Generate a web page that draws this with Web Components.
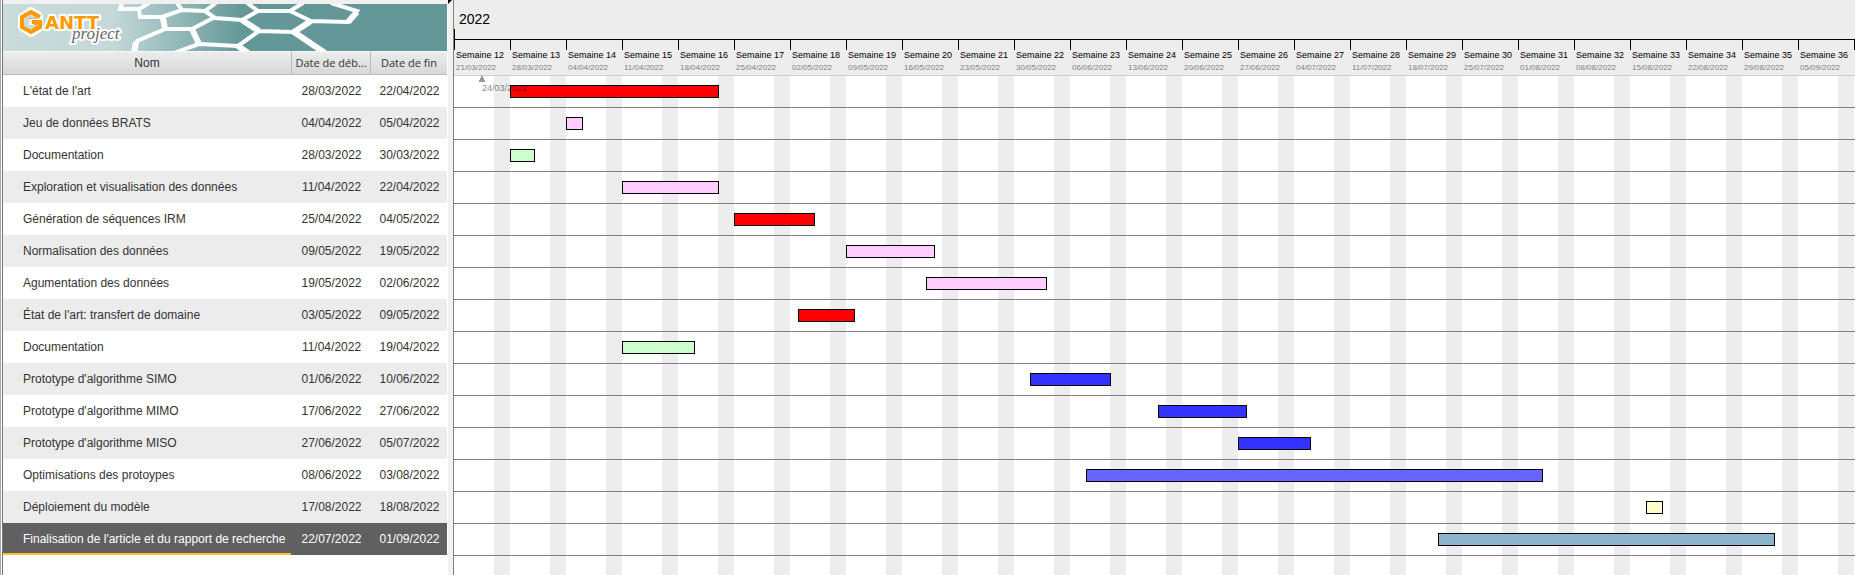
<!DOCTYPE html>
<html lang="fr">
<head>
<meta charset="utf-8">
<title>GanttProject</title>
<style>
  body { margin: 0; background: #fff; font-family: "Liberation Sans", Arial, sans-serif; }
</style>
</head>
<body>
<gantt-app></gantt-app>

<template id="banner-template">
  <style>
    :host { display: block; background: linear-gradient(90deg, #c9dbdb 0, #c4d8d8 110px, #649898 240px); }
    svg { display: block; }
    .brand { font-family: "DejaVu Sans", sans-serif; font-weight: bold; font-size: 18px; }
    .sub { font-family: "Liberation Serif", serif; font-style: italic; font-size: 17px; }
    .halo { paint-order: stroke; stroke: #fff; stroke-width: 4px; stroke-linejoin: round; }
  </style>
  <svg width="444" height="47" viewBox="3 4 444 47" role="img" aria-label="GanttProject">
    <g fill="none" stroke="#fff" stroke-width="4">
      <path d="M122 3L120 9H139L149 3M139 9L140 17H162L182 10L177 3M162 17L165 29H192L213 18M165 29L137 41L134 53M182 10L205 11L216 3M205 11L215 18L242 20L258 11L247 3M192 29L199 44L174 53M199 44L238 46L246 53M238 46L259 31L242 20M258 11H290L303 3M290 11L311 21L348 22L357 11L331 3M311 21L294 32L259 31M294 32L325 53"/>
      <path stroke-width="6" d="M192 29L199 44M311 21L294 32L325 53M348 22L357 12M238 46L248 53M259 31L242 20M163 18L165 29M136 42L134 53"/>
    </g>
    <path d="M39 17L38 15L31 11L22 17V27L31 33L39 28V22H32" fill="none" stroke="#fff" stroke-width="8" stroke-linejoin="round" stroke-linecap="round"/>
    <text class="brand halo" fill="#f90" x="45" y="29">ANTT</text>
    <text class="brand" fill="#f90" x="24" y="29">G</text>
    <path d="M24 18L31 14L37 18H29V25H37L31 30L24 26Z" fill="#c9dbdb"/>
    <path d="M40 17L31 12L22 17V27L31 32L40 27V22H32" fill="none" stroke="#f90" stroke-width="4"/>
    <text class="sub halo" fill="#666" x="72" y="39">project</text>
  </svg>
</template>

<template id="table-template">
  <style>
    :host { display: block; }
    table { width: 100%; border-collapse: separate; border-spacing: 0; table-layout: fixed; font-size: 12px; color: #333; }
    .date { width: 79px; }
    .end { width: 77px; }
    th, td { box-sizing: border-box; padding: 0; white-space: nowrap; text-align: center; }
    th { height: 24px; font-weight: normal; border-bottom: 1px solid #bbb; border-top: 1px solid #f8f8f8; background: linear-gradient(#ececec, #d8d8d8); line-height: 16px; }
    th + th { border-left: 1px solid #bbb; font-family: "Open Sans", sans-serif; font-size: 11px; }
    td { height: 32px; border-bottom: 2px solid transparent; padding-top: 2px; }
    td:first-child { text-align: left; padding-left: 20px; }
    td + td { padding-left: 2px; }
    tbody tr:nth-child(even) { background: #ececec; }
    tbody tr.selected { background: #606060; color: #fff; }
    .selected td:first-child { border-bottom-color: #fbc02d; }
  </style>
  <table>
    <colgroup><col><col class="date"><col class="end"></colgroup>
    <thead><tr><th>Nom</th><th>Date de déb...</th><th>Date de fin</th></tr></thead>
    <tbody></tbody>
  </table>
</template>

<template id="week-template">
  <style>
    :host { display: block; flex: none; box-sizing: border-box; width: 56px; height: 36px; white-space: nowrap;
      background: linear-gradient(#000, #000) 0 0 / 1px 11px no-repeat; padding: 10px 0 0 2px; }
    .name { font-size: 9px; line-height: 12px; color: #000; }
    .day { font-size: 8px; line-height: 14px; color: #808080; }
  </style>
  <div class="name"><slot></slot></div>
  <div class="day"><slot name="day"></slot></div>
</template>

<template id="bar-template">
  <style>
    :host { display: block; box-sizing: border-box; height: 13px; border: 1px solid #000; margin-right: -1px; background: var(--bar); }
  </style>
</template>

<template id="chart-template">
  <style>
    :host { display: flex; flex-direction: column; position: relative; overflow: hidden; }
    .year { box-sizing: border-box; height: 39px; padding: 11px 0 0 5px; font-size: 14px; line-height: 16px;
      background: linear-gradient(#000, #000) 0 100% / 1px 10px no-repeat, #ededed; }
    .weeks { display: flex; background: #ededed; border-bottom: 1px solid #ccc; height: 35px; border-top: 1px solid #000; }
    .weeks week-cell { margin-top: -1px; }
    .body { flex: 1; background: repeating-linear-gradient(90deg, #fff 0 40px, #ededed 40px 56px); }
    .row { box-sizing: border-box; display: grid; grid-template-columns: repeat(auto-fill, 8px); height: 32px; padding-top: 9px; border-bottom: 1px solid #808080; align-items: start; }
    .today { position: absolute; top: 76px; left: 24px; color: rgba(0, 0, 0, .5); font-size: 9px; line-height: 10px; padding: 7px 0 0 4px; }
    .today svg { position: absolute; top: 0; left: 1px; }
    .today span { display: block; }
  </style>
  <div class="year">2022</div>
  <div class="weeks"></div>
  <div class="body"></div>
  <div class="today">
    <svg width="6" height="6" viewBox="0 0 6 6"><path d="M2 0H4V2H5V4H6V6H0V4H1V2H2Z" fill="#999"/></svg>
    <span>24/03/2022</span>
  </div>
</template>

<template id="app-template">
  <style>
    :host { display: flex; min-height: 100vh; }
    .side { flex: none; box-sizing: border-box; width: 448px; background: #fff; border-left: 1px solid #aaa; padding-right: 1px; }
    .inner { border-left: 1px solid #777; margin-left: 1px; min-height: 100vh; }
    .top { height: 4px; background: #f0f0f0; }
    .split { flex: none; box-sizing: border-box; width: 6px; background: #f2f2f2; border-right: 1px solid #808080; }
    .split svg { display: block; }
    time-chart { flex: 1; min-width: 0; }
  </style>
  <div class="side"><div class="inner">
    <div class="top"></div>
    <gantt-banner></gantt-banner>
    <task-table></task-table>
  </div></div>
  <div class="split"><svg width="4" height="4" viewBox="0 0 4 4"><path d="M0 0H4L0 4Z"/></svg></div>
  <time-chart></time-chart>
</template>

<script>
  const tasks = [
    ["L'état de l'art", "28/03/2022", "22/04/2022", "#ff0000"],
    ["Jeu de données BRATS", "04/04/2022", "05/04/2022", "#ffccff"],
    ["Documentation", "28/03/2022", "30/03/2022", "#ccffcc"],
    ["Exploration et visualisation des données", "11/04/2022", "22/04/2022", "#ffccff"],
    ["Génération de séquences IRM", "25/04/2022", "04/05/2022", "#ff0000"],
    ["Normalisation des données", "09/05/2022", "19/05/2022", "#ffccff"],
    ["Agumentation des données", "19/05/2022", "02/06/2022", "#ffccff"],
    ["État de l'art: transfert de domaine", "03/05/2022", "09/05/2022", "#ff0000"],
    ["Documentation", "11/04/2022", "19/04/2022", "#ccffcc"],
    ["Prototype d'algorithme SIMO", "01/06/2022", "10/06/2022", "#3333ff"],
    ["Prototype d'algorithme MIMO", "17/06/2022", "27/06/2022", "#3333ff"],
    ["Prototype d'algorithme MISO", "27/06/2022", "05/07/2022", "#3333ff"],
    ["Optimisations des protoypes", "08/06/2022", "03/08/2022", "#6666ff"],
    ["Déploiement du modèle", "17/08/2022", "18/08/2022", "#ffffcc"],
    ["Finalisation de l'article et du rapport de recherche", "22/07/2022", "01/09/2022", "#8cb4cd"]
  ];
  const DAY = 86400000;
  const origin = Date.UTC(2022, 2, 21);
  const dayIndex = text => {
    const [d, m, y] = text.split("/").map(Number);
    return (Date.UTC(y, m - 1, d) - origin) / DAY;
  };
  const formatDay = index => {
    const d = new Date(origin + index * DAY);
    return [String(d.getUTCDate()).padStart(2, "0"), String(d.getUTCMonth() + 1).padStart(2, "0"), d.getUTCFullYear()].join("/");
  };

  class TemplateElement extends HTMLElement {
    constructor() {
      super();
      this.attachShadow({ mode: "open" })
        .append(document.getElementById(this.constructor.template).content.cloneNode(true));
    }
  }
  customElements.define("gantt-banner", class extends TemplateElement { static template = "banner-template"; });
  customElements.define("week-cell", class extends TemplateElement { static template = "week-template"; });

  customElements.define("task-bar", class extends TemplateElement {
    static template = "bar-template";
    connectedCallback() {
      const start = dayIndex(this.getAttribute("start"));
      const end = dayIndex(this.getAttribute("end"));
      this.style.gridColumn = `${start + 1} / ${end + 2}`;
      this.style.setProperty("--bar", this.getAttribute("color"));
    }
  });

  customElements.define("task-table", class extends TemplateElement {
    static template = "table-template";
    connectedCallback() {
      const body = this.shadowRoot.querySelector("tbody");
      tasks.forEach((task, i) => {
        const row = body.insertRow();
        if (i === tasks.length - 1) row.className = "selected";
        task.slice(0, 3).forEach(text => { row.insertCell().textContent = text; });
      });
    }
  });

  customElements.define("time-chart", class extends TemplateElement {
    static template = "chart-template";
    connectedCallback() {
      const weeks = this.shadowRoot.querySelector(".weeks");
      for (let i = 0; i < 26; i++) {
        const cell = document.createElement("week-cell");
        if (i < 25) {
          const day = document.createElement("span");
          day.slot = "day";
          day.textContent = formatDay(i * 7);
          cell.append(`Semaine ${12 + i}`, day);
        }
        weeks.append(cell);
      }
      const body = this.shadowRoot.querySelector(".body");
      for (const [name, start, end, color] of tasks) {
        const row = document.createElement("div");
        row.className = "row";
        const bar = document.createElement("task-bar");
        bar.setAttribute("start", start);
        bar.setAttribute("end", end);
        bar.setAttribute("color", color);
        bar.setAttribute("title", name);
        row.append(bar);
        body.append(row);
      }
    }
  });
  customElements.define("gantt-app", class extends TemplateElement { static template = "app-template"; });
</script>
</body>
</html>
